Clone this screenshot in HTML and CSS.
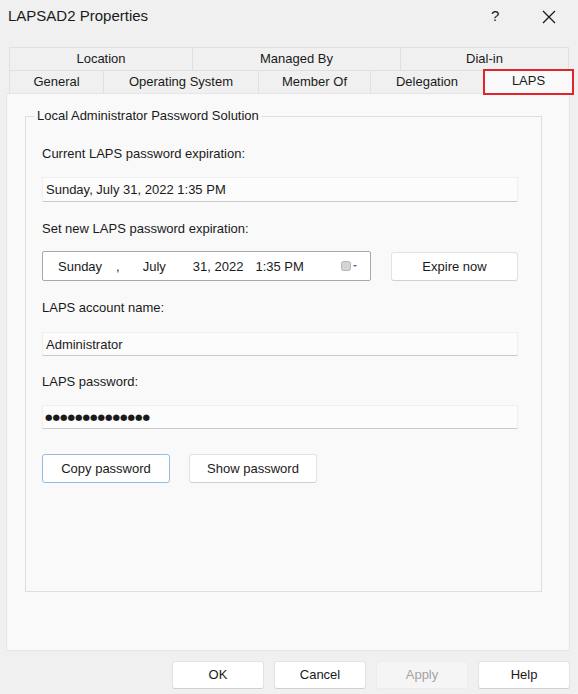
FILE: index.html
```html
<!DOCTYPE html>
<html>
<head>
<meta charset="utf-8">
<link rel="stylesheet" href="styles.css">
</head>
<body>
<div class="window">
  <div class="titlebar">
    <span class="title">LAPSAD2 Properties</span>
    <span class="help">?</span>
    <svg class="close" width="14" height="14" viewBox="0 0 14 14"><path d="M1 1 L13 13 M13 1 L1 13" stroke="#1a1a1a" stroke-width="1.3" fill="none"/></svg>
  </div>
  <div class="tabs">
    <div class="tabrow row1">
      <div class="tab t-loc">Location</div>
      <div class="tab t-man">Managed By</div>
      <div class="tab t-dial">Dial-in</div>
    </div>
    <div class="tabrow row2">
      <div class="tab t-gen">General</div>
      <div class="tab t-os">Operating System</div>
      <div class="tab t-mem">Member Of</div>
      <div class="tab t-del">Delegation</div>
      <div class="tab t-laps selected">LAPS</div>
    </div>
  </div>
  <div class="panel">
    <fieldset class="group">
      <legend>Local Administrator Password Solution</legend>
      <div class="label l1">Current LAPS password expiration:</div>
      <div class="field f1">Sunday, July 31, 2022 1:35 PM</div>
      <div class="label l2">Set new LAPS password expiration:</div>
      <div class="pickrow">
        <div class="picker">
          <span class="p-day">Sunday</span>
          <span class="p-comma">,</span>
          <span class="p-month">July</span>
          <span class="p-date">31, 2022</span>
          <span class="p-time">1:35 PM</span>
          <svg class="p-icon" width="18" height="10" viewBox="0 0 18 10"><rect x="0.5" y="0.5" width="9" height="9" rx="2" fill="#d4d4d4" stroke="#b4b4b4"/><path d="M12 4 L16 4 L14 6 Z" fill="#3a6fb0"/></svg>
        </div>
        <div class="btn expire">Expire now</div>
      </div>
      <div class="label l3">LAPS account name:</div>
      <div class="field f3">Administrator</div>
      <div class="label l4">LAPS password:</div>
      <div class="field f4 dots">●●●●●●●●●●●●●●</div>
      <div class="btnrow">
        <div class="btn copy">Copy password</div>
        <div class="btn show">Show password</div>
      </div>
    </fieldset>
  </div>
  <div class="footer">
    <div class="btn fbtn">OK</div>
    <div class="btn fbtn">Cancel</div>
    <div class="btn fbtn disabled">Apply</div>
    <div class="btn fbtn">Help</div>
  </div>
</div>
</body>
</html>
```

FILE: styles.css
```css
html, body {
  margin: 0;
  padding: 0;
  background: #f0f0f0;
}
body {
  width: 578px;
  height: 694px;
  overflow: hidden;
  font-family: "Liberation Sans", Arial, sans-serif;
  font-size: 13px;
  color: #1a1a1a;
}
.window {
  width: 578px;
  height: 694px;
}
.titlebar {
  height: 47px;
  display: flex;
  align-items: flex-start;
}
.title {
  font-size: 15px;
  margin-left: 8px;
  margin-top: 7px;
  line-height: 18px;
}
.help {
  font-size: 15px;
  margin-left: 343px;
  margin-top: 7px;
  line-height: 18px;
}
.close {
  margin-left: 43px;
  margin-top: 10px;
}
.tabs {
  height: 46px;
  padding-left: 9px;
}
.tabrow {
  display: flex;
  height: 23px;
}
.tab {
  box-sizing: border-box;
  height: 23px;
  line-height: 22px;
  text-align: center;
  border: 1px solid #e0e0e0;
  border-bottom: none;
  margin-right: -1px;
  background: #f0f0f0;
}
.t-loc { width: 184px; }
.t-man { width: 209px; }
.t-dial { width: 169px; }
.t-gen { width: 95px; }
.t-os { width: 156px; }
.t-mem { width: 113px; }
.t-del { width: 114px; }
.t-laps {
  width: 91px;
  height: 26px;
  margin-top: -1px;
  line-height: 20px;
  background: #f9f9f9;
  border: 2px solid #e0242a;
  position: relative;
  z-index: 2;
}
.panel {
  box-sizing: border-box;
  margin-left: 6px;
  width: 564px;
  height: 558px;
  background: #f9f9f9;
  border: 1px solid #e6e6e6;
  padding: 14px 0 0 18px;
}
.group {
  box-sizing: border-box;
  margin: 0;
  width: 517px;
  height: 484px;
  border: 1px solid #dedede;
  padding: 0 0 0 16px;
}
.group legend {
  padding: 0 3px;
  margin-left: -8px;
  line-height: 16px;
  font-size: 13px;
}
.label {
  height: 18px;
  line-height: 18px;
}
.l1 { margin-top: 21px; }
.l2 { margin-top: 18px; }
.l3 { margin-top: 18px; }
.l4 { margin-top: 17px; }
.field {
  box-sizing: border-box;
  width: 476px;
  background: #fcfcfc;
  border: 1px solid #f0f0f0;
  border-bottom: 1px solid #c9c9c9;
  padding-left: 3px;
}
.f1 { margin-top: 14px; height: 25px; line-height: 24px; }
.f3 { margin-top: 15px; height: 24px; line-height: 23px; }
.f4 { margin-top: 14px; height: 24px; line-height: 23px; }
.dots {
  font-size: 8.6px;
  padding-left: 2px;
  font-family: "DejaVu Sans", sans-serif;
}
.pickrow {
  display: flex;
  margin-top: 13px;
  height: 30px;
}
.picker {
  box-sizing: border-box;
  width: 329px;
  height: 30px;
  background: #ffffff;
  border: 1px solid #a8a8a8;
  border-radius: 2px;
  display: flex;
  align-items: center;
}
.p-day { margin-left: 15px; }
.p-comma { margin-left: 14px; }
.p-month { margin-left: 23px; }
.p-date { margin-left: 27px; }
.p-time { margin-left: 12px; }
.p-icon { margin-left: 37px; }
.btn {
  box-sizing: border-box;
  background: #ffffff;
  border: 1px solid #e2e2e2;
  border-bottom-color: #d0d0d0;
  border-radius: 3px;
  text-align: center;
}
.expire {
  width: 127px;
  height: 29px;
  line-height: 27px;
  margin-left: 20px;
  margin-top: 1px;
}
.btnrow {
  display: flex;
  margin-top: 25px;
}
.copy {
  width: 128px;
  height: 29px;
  line-height: 27px;
  border: 1px solid #90bde6;
}
.show {
  width: 128px;
  height: 29px;
  line-height: 27px;
  margin-left: 19px;
}
.footer {
  display: flex;
  justify-content: flex-end;
  gap: 10px;
  padding-right: 8px;
  margin-top: 10px;
}
.fbtn {
  width: 92px;
  height: 28px;
  line-height: 26px;
}
.disabled {
  background: #f5f5f5;
  border-color: #ececec;
  color: #a3a3a3;
}
```
